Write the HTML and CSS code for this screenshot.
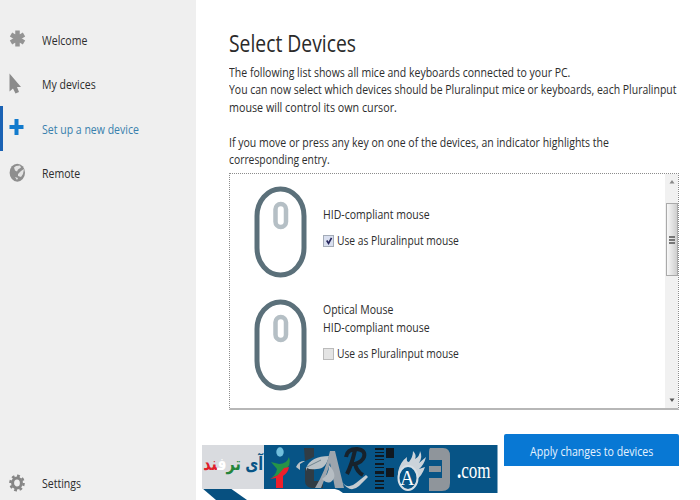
FILE: index.html
```html
<!DOCTYPE html>
<html lang="en">
<head>
<meta charset="utf-8">
<title>Select Devices</title>
<link rel="stylesheet" href="styles.css">
</head>
<body>
<div class="app">
  <aside class="sidebar">
    <nav class="nav">
      <a class="item"><svg class="icon" viewBox="0 0 16 18"><path d="M8.500 .5v16M2 4.500l13 8M15 4.500l-13 8" stroke="#949494" stroke-width="4.500"/></svg><span class="label">Welcome</span></a>
      <a class="item"><svg class="icon" viewBox="0 0 16 18"><path d="M.5-1.500v18l3.500-3 2.500 5 3.500-1.600-2-5H12z" fill="#8b8b8b"/></svg><span class="label">My devices</span></a>
      <a class="item active"><svg class="icon" viewBox="0 0 16 18"><path d="M7.500 0v16M.5 8h14" stroke="#127bcd" stroke-width="4"/></svg><span class="label">Set up a new device</span></a>
      <a class="item"><svg class="icon" viewBox="0 0 16 18"><ellipse cx="8.300" cy="8.700" rx="7.700" ry="9" fill="#8e8e8e"/><path d="M7 2l4-.5 1 2-3 2-1 2-2-1-1-3zM9 10l3-3 3-2-1 5-2 3-3-1zM6 13l3 1-1 2z" fill="#e3e3e3"/></svg><span class="label">Remote</span></a>
    </nav>
    <a class="item settings"><svg class="icon" viewBox="0 0 16 18"><ellipse cx="8" cy="9" rx="6.600" ry="7.200" fill="none" stroke="#868686" stroke-width="2.400" stroke-dasharray="2.800 2.600"/><ellipse cx="8" cy="9" rx="4.400" ry="5" fill="none" stroke="#868686" stroke-width="3"/></svg><span class="label">Settings</span></a>
  </aside>
  <main class="main">
    <h1 class="title"><span>Select Devices</span></h1>
    <div class="copy">
      <p class="l1">The following list shows all mice and keyboards connected to your PC.</p>
      <p class="l2">You can now select which devices should be Pluralinput mice or keyboards, each Pluralinput</p>
      <p class="l3">mouse will control its own cursor.</p>
      <p class="gap"></p>
      <p class="l4">If you move or press any key on one of the devices, an indicator highlights the</p>
      <p class="l5">corresponding entry.</p>
    </div>
    <section class="list">
      <div class="devices">
        <article class="device">
          <svg class="mouse" viewBox="0 0 54 92"><rect x="3" y="3" width="47" height="86" rx="23.500" ry="27" fill="#fff" stroke="#5b707a" stroke-width="5"/><rect x="21.500" y="18" width="10.500" height="23" rx="5.250" fill="#fff" stroke="#b5bfc5" stroke-width="4.500"/></svg>
          <div class="info single"><p>HID-compliant mouse</p><label class="use"><i class="box"><svg viewBox="0 0 11 11"><path d="M3 5l2 3.200L8.300 2" fill="none" stroke="#25255c" stroke-width="1.800"/></svg></i><span>Use as Pluralinput mouse</span></label></div>
        </article>
        <article class="device">
          <svg class="mouse" viewBox="0 0 54 92"><rect x="3" y="3" width="47" height="86" rx="23.500" ry="27" fill="#fff" stroke="#5b707a" stroke-width="5"/><rect x="21.500" y="18" width="10.500" height="23" rx="5.250" fill="#fff" stroke="#b5bfc5" stroke-width="4.500"/></svg>
          <div class="info"><p>Optical Mouse</p><p>HID-compliant mouse</p><label class="use"><i class="box off"></i><span>Use as Pluralinput mouse</span></label></div>
        </article>
      </div>
      <div class="scroll">
        <svg class="arrow" viewBox="0 0 8 6"><path d="M1.500 4.500h5L4 1z" fill="#888"/></svg>
        <div class="thumb"><i></i><i></i><i></i></div>
        <svg class="arrow down" viewBox="0 0 8 6"><path d="M1.500 1.500h5L4 5z" fill="#555"/></svg>
      </div>
    </section>
    <button class="apply"><span>Apply changes to devices</span></button>
  </main>
  <div class="brand">
    <svg class="art" viewBox="0 0 296 55" width="296" height="55">
      <path d="M0 43h28l17 12H14z" fill="#075080"/>
      <path d="M0 0h62v44H0z" fill="#d9dbdf"/>
      <path d="M62 0h233.500v48H141q-4-3.500-8-4H62z" fill="#075486"/>
      <ellipse cx="78" cy="7" rx="3.700" ry="4.700" fill="#72bfdd"/>
      <path d="M69 17l8 2q8 0 10-7 3 9-5 13l-3 4-10 4q5-3 6-9z" fill="#259447"/>
      <path d="M68 34l8-4 6-7 5-1q-1 6-6 9v12h-7V33z" fill="#ed1f2b"/>
      <path d="M102 3h10v9l-9 4zM103 23h9v13h9v7h-11q-7-1-7-7z" fill="#303c45"/>
      <path d="M104 23q5-12 23-12-3 13-12 13-7 1-10-1l-1 3zM94 22q3-7 9-6l-5 3v6z" fill="#b9c1c6"/><path d="M105 22l14-7" stroke="#71858f"/>
      <path d="M113 43q11-18 15-37h5l9 37h-9l-5-25q-4 14-9 25z" fill="#9da5ad"/>
      <path d="M120 34q7-4 7-14 9 10 3 16-4 4-10-2z" fill="#b6bdc3"/>
      <path d="M144 12q1-8 11-8 9 1 7 8-2 5-9 7 2 8 8 11M153 5q-3 14-8 24M148 19h5" fill="none" stroke="#17222c" stroke-width="4"/>
      <path d="M140 37q6 8 14 1l10-8 2 2-9 9q-9 8-17-4z" fill="#c5ccd1"/>
      <path fill="#10181f" d="M173 3h9v2h-9zm0 4h9v1h-9zm0 3h9v2h-9zm0 4h9v1h-9zm0 4h9v2h-9zm0 4h9v1h-9zm0 4h9v3h-9zm0 5h9v1h-9zm0 4h9v2h-9zm0 4h9v1h-9zm0 3h9v2h-9zM184 3h8v10h-8zm0 20h8v9h-8z"/>
      <path d="M196 27q2-10 9-15-1 5 2 5 4-5 4-11 4 4 2 8 5-3 5-8 3 6-1 12l7-6q-2 8-7 12l6-2q-3 9-9 13l-9 9q-10-3-9-17z" fill="#cbd3da"/>
      <ellipse cx="206" cy="33" rx="9.500" ry="12" fill="#075486" stroke="#d7dfe5" stroke-width="2"/>
      <path d="M228 3h13q7 0 7 8v27q0 8-8 8h-13V33h13V15h-13V7q0-3 1-4zM227 21h12v6h-12z" fill="#8f959b"/>
    </svg>
    <div class="words">
      <span class="persian" lang="fa" dir="rtl"><b class="blue">آی</b> <b><span class="green">تر</span><span class="white">ف</span><span class="red">ند</span></b></span>
      <span class="letter">A</span>
      <span class="com"><b>.</b>com</span>
    </div>
  </div>
</div>
</body>
</html>
```
FILE: styles.css
```css
* { box-sizing: border-box; }
body { margin: 0; background: #fff; font-family: "Open Sans", "Noto Sans", sans-serif; color: #2d2d2d; }
p, h1 { margin: 0; font-weight: 400; }
.app { position: relative; display: flex; width: 700px; height: 500px; overflow: hidden; }
.sidebar { display: flex; flex-direction: column; justify-content: space-between; width: 196px; padding: 17px 0 0; background: #efefef; }
.item { display: flex; align-items: center; height: 44.500px; padding-left: 9px; font-size: 13px; border-left: 0 solid #1a62b4; }
.active { border-left-width: 3.500px; padding-left: 6px; color: #397fad; }
.icon { width: 16px; height: 18px; margin-right: 16.500px; overflow: visible; }
.label { padding-top: 1px; transform: scaleX(.81); transform-origin: 0 50%; white-space: nowrap; }
.settings { height: 34px; }
.settings .label { padding-top: 0; }
.main { display: flex; flex-direction: column; width: 504px; padding: 26px 21px 0 33px; }
.title { height: 37px; font-size: 23px; line-height: 34px; color: #2a2a2a; }
.title span { display: inline-block; transform: scaleX(.84); transform-origin: 0 50%; white-space: nowrap; }
.copy { height: 110px; padding-top: .5px; font-size: 13px; line-height: 17.600px; }
.copy p { height: 17.600px; transform: scaleX(.809); transform-origin: 0 50%; white-space: nowrap; }
.copy .l2 { transform: scaleX(.804); }
.copy .l3 { transform: scaleX(.825); }
.copy .l5 { transform: scaleX(.795); }
.list { display: flex; justify-content: space-between; flex: none; width: 450px; height: 237px; border: 1px dotted #8c8c8c; border-bottom: 2px solid #b7b7b7; }
.devices { display: flex; flex-direction: column; gap: 21px; padding: 12px 0 0 24px; }
.device { display: flex; gap: 15px; height: 92px; }
.mouse { width: 54px; height: 92px; }
.info { padding-top: 2px; font-size: 12.500px; line-height: 18px; white-space: nowrap; }
.single { padding-top: 20px; }
.info p { transform: scaleX(.84); transform-origin: 0 50%; }
.use { display: flex; align-items: center; gap: 3px; height: 18px; margin-top: 8px; }
.use span { transform: scaleX(.82); transform-origin: 0 50%; }
.box { width: 11px; height: 12px; background: #d9dfef; border: 1px solid #a3abb7; }
.box svg { display: block; width: 10px; height: 10px; }
.off { background: #e4e4e4; border-color: #bbb; }
.scroll { display: flex; flex-direction: column; align-items: center; width: 13px; padding: 5px 0; background: #f1f1f1; }
.arrow { width: 8px; height: 6px; }
.thumb { display: flex; flex-direction: column; align-items: center; justify-content: center; gap: 1px; width: 12px; height: 73px; margin-top: 18px; border: 1px solid #aaa; background: linear-gradient(90deg, #f8f8f8, #cfcfcf); }
.thumb i { width: 6px; height: 2px; background: #777; }
.down { margin-top: auto; }
.apply { align-self: flex-end; flex: none; width: 175px; height: 32px; margin-top: 24px; padding: 2px 0 0; border: 0; border-radius: 2px 2px 0 0; background: #0878d4; color: #e6f3ff; font: 13px "Open Sans", sans-serif; white-space: nowrap; }
.apply span { display: inline-block; transform: scaleX(.815); }
.brand { position: absolute; left: 202px; top: 445px; width: 296px; height: 55px; }
.art { position: absolute; left: 0; top: 0; }
.words { position: relative; display: flex; height: 48px; white-space: nowrap; }
.persian { width: 62px; height: 32px; padding: 0 1px; font: 18px/38px "DejaVu Sans", sans-serif; transform: scaleX(.79); transform-origin: 100% 50%; }
.blue { color: #075486; }
.green { color: #25853b; }
.white { color: #fff; }
.red { color: #df202b; }
.letter { margin-left: 136px; width: 16px; color: #fff; font: 20px/66px "Liberation Serif", serif; text-align: center; }
.com { margin-left: 43px; color: #fff; font: 23px/52px "Liberation Serif", serif; transform: scaleX(.74); transform-origin: 0 50%; }
```
